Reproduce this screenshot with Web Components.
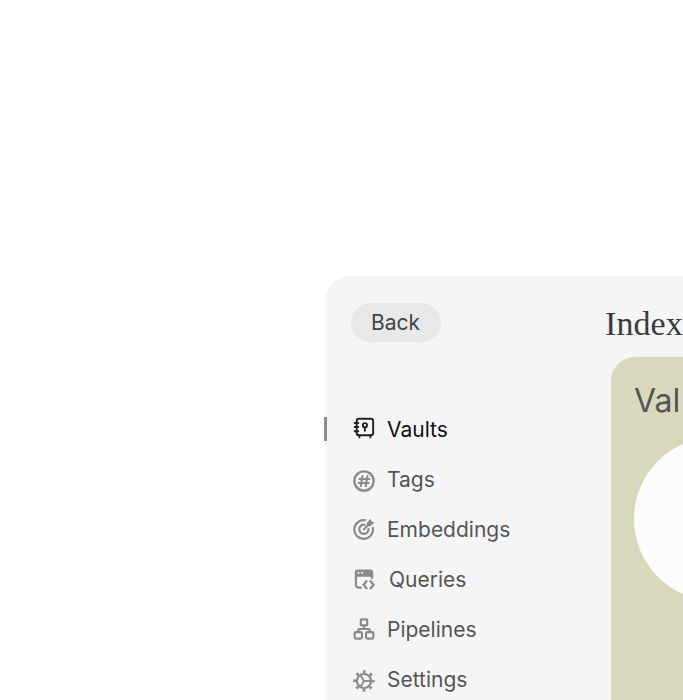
<!DOCTYPE html>
<html lang="en">
<head>
<meta charset="utf-8">
<title>Index</title>
<style>
  html, body { margin: 0; background: #fff; overflow: hidden; }
  body { font-family: Inter, "Liberation Sans", sans-serif; }
</style>
</head>
<body>
<app-panel>
  <back-button slot="back">Back</back-button>
  <nav-item slot="nav" icon="vault" nudge="-1" active>Vaults</nav-item>
  <nav-item slot="nav" icon="tag" nudge="2">Tags</nav-item>
  <nav-item slot="nav" icon="target">Embeddings</nav-item>
  <nav-item slot="nav" icon="query" gap="14">Queries</nav-item>
  <nav-item slot="nav" icon="pipeline">Pipelines</nav-item>
  <nav-item slot="nav" icon="gear" nudge="2">Settings</nav-item>
  <span slot="title">Index</span>
  <value-card>Val</value-card>
</app-panel>

<script>
/**
 * Icons, drawn on a 24x24 box
 */
const ICONS = {
  vault: `<g fill="none" stroke="currentColor" stroke-width="2.100" stroke-linecap="round" stroke-linejoin="round">
      <rect x="4" y="2" width="18" height="18" rx="2.500"/>
      <path d="M1.800 6.500h4M1.800 11h4M1.800 15.500h4M7 20v2M19 20v2"/>
      <circle cx="13" cy="9" r="2.300"/>
      <path d="M13 11.500v3.500"/>
    </g>`,
  tag: `<g fill="none" stroke="currentColor" stroke-linecap="round">
      <circle cx="12" cy="12" r="10.500" stroke-width="2.600"/>
      <path stroke-width="2.200" d="M10.200 6.500l-1.700 11M15.700 6.500L14 17.500M6.800 9.800h11M6.200 14.200h11"/>
    </g>`,
  target: `<g fill="none" stroke="currentColor" stroke-width="2.400" stroke-linecap="round">
      <path d="M13 2.400A10.200 10.200 0 1 0 21.700 11"/>
      <path d="M12.500 7.200A5.100 5.100 0 1 0 17 12"/>
      <path d="M12 12.200L17 7.200"/>
    </g>
    <path d="M15 5.500L19 .8l1.300 3 3 1.200L18.800 9l-3.300-.3z" fill="currentColor"/>`,
  query: `<path d="M5 1.500h14a3 3 0 0 1 3 3v5H2v-5a3 3 0 0 1 3-3z" fill="currentColor"/>
    <circle cx="6" cy="5.300" r="1.200" fill="#f5f5f5"/><circle cx="10" cy="5.300" r="1.200" fill="#f5f5f5"/>
    <path d="M3.200 8v10.500a3 3 0 0 0 3 3h2.500M20.800 8v3" fill="none" stroke="currentColor" stroke-width="2.400" stroke-linecap="round"/>
    <path d="M14.800 14.500l-3.300 3.800 3.300 3.800M19.200 14.500l3.300 3.800-3.300 3.800" fill="none" stroke="currentColor" stroke-width="2.500" stroke-linecap="round" stroke-linejoin="round"/>`,
  pipeline: `<g fill="none" stroke="currentColor" stroke-width="2.400" stroke-linejoin="round">
      <rect x="8.500" y="1.500" width="7" height="6.500" rx="1"/>
      <rect x="1.800" y="15.500" width="8" height="7" rx="1.500"/>
      <rect x="14.200" y="15.500" width="8" height="7" rx="1.500"/>
      <path d="M12 8v4M5.800 15.500V13a1 1 0 0 1 1-1h10.400a1 1 0 0 1 1 1v2.500"/>
    </g>`,
  gear: `<g fill="none" stroke="currentColor">
      <circle cx="12" cy="12" r="10.200" stroke-width="3" stroke-dasharray="3 5.010" stroke-dashoffset="1.500"/>
      <circle cx="12" cy="12" r="7.700" stroke-width="2.300"/>
      <path stroke-width="2" d="M12 12h7.500M12 12L8.200 5.800M12 12l-3.800 6.200"/>
    </g>`
};

class AppPanel extends HTMLElement {
  constructor() {
    super();
    this.attachShadow({ mode: 'open' });
    this.shadowRoot.innerHTML = `
      <style>
        :host {
          display: block;
          height: 700px;
          box-sizing: border-box;
          padding: 276px 0 0 325px;
          overflow: hidden;
        }
        .panel {
          display: flex;
          width: 900px;
          height: 700px;
          background: #f5f5f5;
          border-radius: 26px 0 0 0;
        }
        .side {
          flex: none;
          width: 280px;
          box-sizing: border-box;
          padding-top: 27px;
        }
        .back { padding-left: 26px; }
        nav {
          display: flex;
          flex-direction: column;
          margin-top: 62px;
        }
        main {
          flex: 1;
          min-width: 0;
          padding-top: 26px;
        }
        h1 {
          margin: 0;
          height: 55px;
          font: 400 34px/44px "Liberation Serif", serif;
          letter-spacing: 0.1px;
          color: #3c3c3c;
          white-space: nowrap;
        }
        .body { padding-left: 6px; }
      </style>
      <div class="panel">
        <div class="side">
          <div class="back"><slot name="back"></slot></div>
          <nav><slot name="nav"></slot></nav>
        </div>
        <main>
          <h1><slot name="title"></slot></h1>
          <div class="body"><slot></slot></div>
        </main>
      </div>
    `;
  }
}

class BackButton extends HTMLElement {
  constructor() {
    super();
    this.attachShadow({ mode: 'open' });
    this.shadowRoot.innerHTML = `
      <style>
        :host {
          display: inline-flex;
          align-items: center;
          height: 39px;
          padding: 0 21px 0 20px;
          border-radius: 20px;
          background: #e8e8e8;
          color: #444;
          font: 400 21px/1 Inter, "Liberation Sans", sans-serif;
        }
      </style>
      <slot></slot>
    `;
  }
}

class NavItem extends HTMLElement {
  constructor() {
    super();
    this.attachShadow({ mode: 'open' });
  }

  connectedCallback() {
    const active = this.hasAttribute('active');
    const gap = this.getAttribute('gap') || '12';
    const nudge = Number(this.getAttribute('nudge') || 0);
    this.shadowRoot.innerHTML = `
      <style>
        :host {
          display: flex;
          align-items: center;
          position: relative;
          height: 50px;
          padding-left: 28px;
          gap: ${gap}px;
          color: ${active ? '#111' : '#555'};
          font: 400 21px/1 Inter, "Liberation Sans", sans-serif;
        }
        svg {
          flex: none;
          width: 22px;
          height: 22px;
          margin-top: ${nudge * 2}px;
          color: ${active ? '#222' : '#8a8a8a'};
        }
        .bar {
          position: absolute;
          left: -1px;
          top: 13px;
          width: 3px;
          height: 24px;
          background: #8c8c8c;
        }
      </style>
      ${active ? '<div class="bar"></div>' : ''}
      <svg viewBox="0 0 24 24" aria-hidden="true">${ICONS[this.getAttribute('icon')]}</svg>
      <slot></slot>
    `;
  }
}

class ValueCard extends HTMLElement {
  constructor() {
    super();
    this.attachShadow({ mode: 'open' });
    this.shadowRoot.innerHTML = `
      <style>
        :host {
          display: block;
          box-sizing: border-box;
          height: 400px;
          padding: 24px 23px;
          background: #d8d9bc;
          border-radius: 24px 0 0 0;
        }
        .label {
          color: #555;
          font: 400 32px/40px Inter, "Liberation Sans", sans-serif;
        }
        .dial {
          width: 164px;
          height: 164px;
          margin: 16px 0 0 0;
          border-radius: 50%;
          background: #fcfcfc;
        }
      </style>
      <div class="label"><slot></slot></div>
      <div class="dial"></div>
    `;
  }
}

customElements.define('app-panel', AppPanel);
customElements.define('back-button', BackButton);
customElements.define('nav-item', NavItem);
customElements.define('value-card', ValueCard);
</script>
</body>
</html>
